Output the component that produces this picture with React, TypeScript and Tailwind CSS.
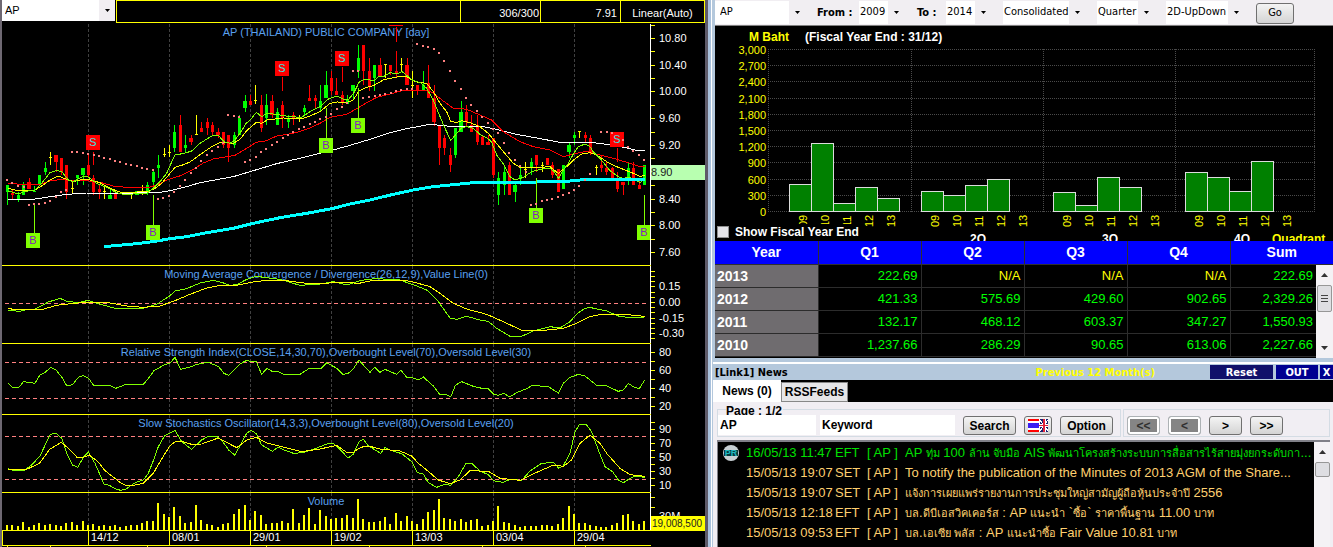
import type { ReactNode } from "react";
import clsx from "clsx";

// Plot coordinates are stored in thirds of a pixel
const UNIT = 3;
const STEP = 5.4;
const GRID = [88, 169, 250, 331, 412, 493, 574];
const DATES = ["14/12", "08/01", "29/01", "19/02", "13/03", "03/04", "29/04"];

const LIME = "#80ff00";
const FILL: Record<string, string> = { g: "#00ff00", r: "#ff0000", y: "#ffff00" };

type Candle = [string, number, number, number, number];

// colour, high, body top, body bottom, low
const candles: Candle[] = [
  ["g", 555, 555, 576, 615], ["r", 568, 580, 586, 597], ["g", 575, 585, 598, 606], ["g", 546, 555, 585, 585],
  ["r", 534, 546, 566, 566], ["g", 558, 573, 576, 576], ["g", 525, 525, 555, 555], ["g", 486, 503, 516, 525],
  ["y", 456, 472, 475, 495], ["r", 465, 465, 486, 516], ["r", 474, 474, 516, 525], ["r", 495, 495, 576, 597],
  ["y", 543, 565, 568, 582], ["g", 525, 525, 534, 555], ["g", 504, 504, 525, 555], ["r", 465, 495, 525, 534],
  ["r", 525, 534, 576, 585], ["r", 555, 567, 576, 597], ["y", 555, 573, 576, 597], ["g", 565, 585, 597, 597],
  ["r", 570, 580, 597, 597], ["y", 580, 580, 583, 583], ["y", 580, 580, 583, 583], ["y", 577, 577, 580, 597],
  ["g", 573, 573, 584, 584], ["y", 555, 577, 580, 585], ["g", 546, 555, 576, 585], ["g", 508, 516, 546, 556],
  ["g", 465, 495, 504, 535], ["y", 444, 462, 465, 472], ["y", 435, 455, 458, 472], ["g", 375, 396, 444, 455],
  ["r", 345, 375, 455, 455], ["g", 405, 435, 444, 455], ["r", 405, 414, 426, 435], ["y", 345, 402, 405, 405],
  ["r", 365, 384, 396, 396], ["r", 354, 366, 384, 405], ["r", 365, 375, 396, 405], ["r", 384, 396, 405, 415],
  ["r", 396, 396, 436, 445], ["r", 405, 405, 445, 486], ["g", 396, 405, 435, 444], ["g", 345, 354, 405, 405],
  ["g", 285, 303, 324, 336], ["r", 285, 303, 315, 315], ["y", 255, 300, 303, 312], ["r", 285, 315, 384, 396],
  ["g", 283, 315, 354, 375], ["r", 285, 303, 345, 354], ["g", 324, 336, 375, 375], ["r", 303, 315, 354, 384],
  ["g", 345, 354, 366, 384], ["r", 336, 346, 354, 375], ["y", 345, 353, 356, 366], ["g", 315, 324, 336, 345],
  ["r", 255, 294, 303, 303], ["r", 285, 294, 303, 324], ["g", 255, 303, 324, 334], ["g", 213, 255, 294, 294],
  ["r", 213, 234, 273, 285], ["r", 234, 273, 285, 285], ["r", 273, 285, 306, 315], ["g", 285, 300, 312, 312],
  ["g", 255, 255, 273, 297], ["g", 135, 174, 213, 234], ["r", 135, 135, 213, 254], ["r", 174, 213, 258, 273],
  ["g", 195, 195, 234, 273], ["r", 174, 195, 231, 231], ["y", 192, 192, 195, 234], ["r", 195, 195, 213, 225],
  ["r", 153, 213, 222, 234], ["y", 174, 192, 195, 213], ["r", 174, 195, 255, 255], ["y", 213, 255, 258, 294],
  ["r", 255, 255, 270, 285], ["g", 213, 255, 270, 270], ["r", 195, 249, 294, 294], ["r", 255, 294, 366, 378],
  ["r", 378, 378, 444, 495], ["r", 405, 414, 444, 465], ["r", 445, 465, 495, 516], ["g", 384, 384, 465, 474],
  ["g", 303, 336, 396, 396], ["r", 315, 336, 366, 378], ["r", 345, 375, 396, 396], ["r", 345, 375, 426, 435],
  ["r", 405, 410, 435, 435], ["r", 405, 425, 435, 435], ["r", 415, 415, 525, 534], ["g", 516, 534, 585, 615],
  ["g", 495, 516, 555, 585], ["r", 486, 495, 585, 585], ["g", 550, 555, 576, 606], ["g", 498, 525, 537, 555],
  ["y", 486, 507, 510, 534], ["g", 474, 486, 504, 525], ["r", 465, 465, 495, 516], ["y", 486, 495, 498, 516],
  ["r", 474, 474, 495, 495], ["r", 486, 495, 525, 534], ["r", 507, 507, 576, 576], ["g", 495, 495, 567, 567],
  ["g", 426, 435, 456, 474], ["g", 396, 405, 414, 435], ["y", 393, 393, 396, 414], ["r", 396, 405, 414, 426],
  ["r", 405, 414, 456, 465], ["y", 495, 502, 505, 524], ["r", 465, 495, 504, 516], ["r", 486, 504, 516, 525],
  ["r", 500, 504, 537, 537], ["r", 516, 534, 567, 576], ["r", 546, 546, 556, 585], ["g", 486, 504, 540, 555],
  ["r", 486, 504, 555, 555], ["r", 540, 555, 567, 567], ["g", 495, 495, 555, 555],
];

const ema5 =
  "24,573 56,582 72,575 105,570 125,550 150,518 170,511 186,516 205,540 220,545 250,529 265,531 290,550 320,562 350,578 365,582 400,582 440,580 460,565 480,545 500,520 525,464 550,461 575,453 600,430 635,408 655,406 672,425 690,430 705,420 720,400 737,372 755,355 769,337 785,350 801,340 834,344 870,350 905,352 930,335 960,320 985,297 1012,288 1028,297 1044,300 1061,280 1077,247 1093,237 1110,240 1125,240 1137,228 1150,230 1170,218 1190,222 1206,215 1225,230 1240,242 1262,248 1280,265 1300,300 1318,345 1335,385 1352,421 1368,403 1385,383 1402,380 1420,385 1440,403 1460,413 1474,425 1490,465 1512,495 1530,530 1545,540 1570,532 1595,515 1620,508 1650,505 1663,515 1675,536 1690,510 1705,490 1720,462 1735,440 1755,432 1770,440 1780,456 1800,475 1830,512 1855,530 1870,535 1890,532 1905,540 1920,548 1934,535";
const ema10 =
  "24,565 56,573 105,570 125,558 150,540 175,528 200,538 220,545 250,538 270,540 300,548 330,565 360,576 410,576 445,574 465,565 485,550 510,520 525,502 545,496 570,486 600,464 635,440 660,427 700,430 720,418 740,392 769,367 785,370 801,360 850,354 905,356 930,348 960,335 990,310 1012,306 1040,308 1060,300 1077,273 1100,262 1120,257 1150,240 1170,235 1200,229 1220,230 1245,245 1280,250 1300,275 1320,310 1340,335 1352,364 1370,368 1385,362 1410,368 1440,380 1465,400 1485,425 1512,457 1540,490 1560,502 1620,502 1650,500 1675,520 1700,500 1720,480 1745,462 1770,458 1790,465 1820,485 1850,500 1875,510 1900,520 1920,530 1934,525";
const ema25 =
  "24,549 60,553 120,553 155,541 190,539 215,543 250,541 300,547 340,558 390,563 445,563 470,555 500,540 545,526 580,508 610,489 640,477 705,466 740,445 769,427 800,422 830,408 880,400 920,388 960,370 990,352 1040,343 1077,322 1100,308 1130,292 1170,282 1210,271 1285,271 1300,280 1330,303 1360,325 1385,325 1410,332 1440,345 1475,360 1510,395 1560,425 1600,440 1650,450 1690,470 1720,462 1760,454 1800,465 1840,475 1880,487 1915,498 1934,500";
const ema75 =
  "24,598 100,598 150,590 200,583 260,579 400,579 480,577 520,570 560,560 600,548 700,530 760,512 830,491 920,470 1000,450 1050,436 1110,418 1170,398 1220,386 1290,373 1350,379 1450,380 1490,388 1550,403 1610,414 1680,427 1770,427 1830,434 1880,444 1910,451 1934,452";
const ema200 =
  "312,740 400,732 460,725 510,716 560,710 620,698 700,685 760,670 840,653 920,640 1000,625 1050,612 1110,600 1180,583 1240,570 1300,560 1370,553 1430,547 1580,547 1710,543 1760,538 1934,538";
const sar =
  "22,539 37,548 54,557 71,562 87,614 102,612 118,611 135,608 151,602 167,590 183,577 199,569 216,455 232,457 248,458 264,461 281,464 297,467 313,473 329,477 345,482 361,486 378,491 394,494 410,497 426,503 442,507 459,509 474,596 490,593 506,588 522,577 539,559 556,540 572,518 588,503 604,482 620,466 636,452 653,440 669,428 684,344 701,347 717,350 735,485 751,480 767,472 783,457 799,447 816,435 832,425 848,413 864,404 880,396 897,387 913,380 929,372 945,365 961,358 977,350 993,342 1010,328 1026,320 1042,310 1059,212 1075,214 1089,293 1107,290 1124,287 1140,284 1156,281 1172,278 1188,274 1203,271 1220,268 1236,266 1251,133 1269,137 1285,140 1301,146 1317,158 1332,184 1349,212 1365,242 1382,268 1398,293 1413,314 1430,334 1447,352 1463,368 1479,386 1495,400 1512,430 1528,458 1545,480 1561,497 1577,516 1593,614 1609,611 1625,604 1641,600 1656,597 1674,590 1690,585 1706,580 1721,570 1737,557 1754,539 1771,523 1804,395 1820,395 1836,399 1868,421 1885,440 1900,452 1916,466 1933,479";

const macd =
  "24,151 60,154 80,149 105,147 125,137 145,126 180,115 200,124 235,128 265,121 290,130 320,138 345,145 430,145 470,133 510,107 525,93 560,86 600,69 640,61 665,67 690,76 710,74 740,58 769,49 800,53 840,58 900,76 960,72 1000,65 1040,75 1077,63 1100,58 1130,56 1200,60 1250,78 1280,90 1310,118 1350,174 1370,178 1400,169 1440,180 1465,184 1490,205 1530,229 1565,229 1600,213 1650,200 1680,204 1710,185 1730,162 1750,148 1768,142 1820,153 1860,170 1920,174 1934,170";
const macdSignal =
  "24,145 50,150 125,149 170,136 220,130 260,127 330,129 380,138 430,142 480,138 525,122 570,103 620,84 660,76 710,76 760,66 800,61 850,61 920,70 970,71 1010,66 1077,70 1110,63 1150,61 1220,62 1240,66 1290,80 1320,100 1360,130 1400,147 1460,163 1510,185 1565,211 1630,211 1690,205 1730,190 1770,170 1810,162 1860,162 1934,169";
const rsi =
  "24,370 38,382 57,382 70,365 105,370 120,345 135,337 153,322 168,330 186,352 200,377 218,374 235,352 250,347 265,354 281,376 330,376 347,385 378,373 430,373 445,355 462,332 494,314 510,309 525,292 542,328 575,320 590,313 625,307 656,320 672,340 686,346 720,312 740,301 755,306 769,305 785,343 801,325 818,335 834,334 850,343 900,343 928,325 963,325 980,308 1012,326 1028,343 1044,341 1061,325 1077,300 1090,315 1110,337 1124,322 1140,337 1155,328 1190,343 1203,331 1220,352 1240,354 1255,360 1270,351 1300,378 1318,402 1340,404 1352,411 1366,376 1385,365 1420,379 1450,386 1465,386 1480,402 1495,406 1512,400 1528,411 1550,398 1580,386 1597,376 1645,380 1675,399 1690,370 1708,353 1735,343 1755,348 1790,376 1820,378 1855,394 1870,390 1885,370 1900,380 1918,386 1934,360";
const stoK =
  "24,626 40,631 72,631 95,615 120,588 150,524 168,519 185,535 200,580 217,615 233,622 250,592 265,576 285,610 312,672 330,677 345,686 362,691 378,687 395,675 412,665 430,660 445,640 462,597 475,560 494,527 525,511 545,545 575,568 605,540 625,529 650,529 665,540 686,570 704,585 720,558 740,520 753,511 769,521 785,555 818,574 834,561 850,569 880,580 910,578 940,568 980,552 1000,550 1020,568 1044,594 1060,583 1077,545 1090,538 1105,558 1142,580 1155,563 1170,570 1205,581 1235,605 1252,638 1270,642 1285,668 1310,682 1335,673 1352,676 1375,650 1398,610 1415,610 1440,633 1465,644 1480,662 1510,667 1530,658 1565,661 1590,633 1625,610 1660,607 1676,624 1690,617 1710,580 1725,515 1738,494 1760,495 1775,515 1795,570 1815,620 1838,635 1855,660 1871,668 1890,655 1905,648 1934,652";
const stoD =
  "24,628 80,628 118,610 150,567 184,547 205,565 232,593 250,592 268,585 295,606 315,632 360,667 378,676 400,676 430,670 460,640 480,605 510,557 525,546 545,544 575,553 605,552 655,534 710,563 740,540 769,532 800,549 850,561 905,575 960,567 1010,556 1040,577 1060,577 1077,565 1093,559 1110,559 1140,567 1200,573 1235,588 1255,610 1280,630 1315,660 1350,671 1380,660 1410,632 1465,634 1500,655 1560,661 1590,646 1640,624 1660,615 1690,619 1715,600 1740,550 1770,525 1800,550 1820,580 1860,625 1890,644 1934,649";
const volume = [
  795, 795, 798, 786, 801, 795, 789, 795, 792, 795, 798, 789, 786, 795, 783, 795, 792, 798, 795, 798, 795, 801, 798,
  795, 795, 789, 783, 783, 729, 762, 771, 741, 768, 789, 786, 735, 780, 792, 795, 801, 792, 789, 762, 747, 735, 780,
  753, 765, 792, 789, 789, 783, 789, 747, 789, 765, 744, 792, 750, 768, 777, 774, 774, 765, 774, 717, 777, 786, 786,
  783, 771, 792, 759, 783, 768, 783, 792, 777, 756, 750, 717, 774, 777, 783, 777, 786, 780, 777, 798, 795, 783, 738,
  786, 789, 795, 801, 798, 798, 798, 795, 795, 798, 792, 774, 738, 762, 789, 789, 795, 798, 801, 801, 795, 789, 765,
  762, 783, 792, 783,
];

// kind, box x, box y, line x, line from, line to
const signals: [string, number, number, number, number, number][] = [
  ["S", 86, 135, 93, 152, 165],
  ["S", 275, 61, 282, 77, 91],
  ["S", 335, 51, 342, 67, 82],
  ["S", 610, 132, 617, 148, 162],
  ["B", 26, 233, 34, 203, 233],
  ["B", 146, 225, 153, 195, 225],
  ["B", 319, 138, 326, 108, 138],
  ["B", 351, 118, 358, 88, 118],
  ["B", 529, 208, 536, 178, 208],
  ["B", 637, 225, 644, 195, 225],
];

function Line({ points, color, width = 1 }: { points: string; color: string; width?: number }) {
  return (
    <g transform={`scale(${1 / UNIT})`}>
      <polyline points={points} fill="none" stroke={color} strokeWidth={width} vectorEffect="non-scaling-stroke" />
    </g>
  );
}

type PanelProps = {
  top: number;
  height: number;
  title?: string;
  levels?: number[];
  ticks?: number[];
  labels?: [string, number][];
  children?: ReactNode;
};

function Panel({ top, height, title, levels = [], ticks = [], labels = [], children }: PanelProps) {
  return (
    <svg
      viewBox={`2 ${top} 703 ${height}`}
      className="block w-full shrink-0 font-['Liberation_Sans',sans-serif] text-[11px]"
      shapeRendering="crispEdges"
    >
      {GRID.map((x) => (
        <path key={x} d={`M${x + 0.5} ${top}V${top + height}`} stroke="#404040" strokeDasharray="3 2" />
      ))}
      {levels.map((y) => (
        <path key={y} d={`M5 ${y + 0.5}H646`} stroke="#ff8080" strokeDasharray="4 3" />
      ))}
      {title && (
        <text x="326" y={top + 12} textAnchor="middle" fill="#5aa0f0">
          {title}
        </text>
      )}
      {children}
      <path d={`M650.5 ${top}V${top + height}`} stroke="#fff" />
      {ticks.map((y) => (
        <path key={y} d={`M651 ${Math.floor(y / UNIT) + 0.5}h4`} stroke="#ff0" />
      ))}
      {labels.map(([label, y]) => (
        <text key={label} x="659" y={y + 4} fill="#fff">
          {label}
        </text>
      ))}
      <path d={`M2 ${top + height - 0.5}H651`} stroke="#ff0" />
    </svg>
  );
}

function PricePanel() {
  return (
    <Panel
      top={24}
      height={242}
      ticks={[76, 115, 154, 195, 235, 274, 317, 355, 397, 436, 475, 557, 598, 637, 676, 718, 757]}
      labels={[
        ["10.80", 38], ["10.40", 65], ["10.00", 91], ["9.60", 118],
        ["9.20", 145], ["8.40", 199], ["8.00", 225], ["7.60", 252],
      ]}
    >
      <text x="326" y="36" textAnchor="middle" fill="#5aa0f0">
        AP (THAILAND) PUBLIC COMPANY [day]
      </text>
      {candles.map(([kind, high, open, close, low], i) => {
        const x = Math.round(7 + STEP * i);
        const y = Math.round(open / UNIT);
        const wide = i % 5 === 4 && kind !== "y";
        return (
          <g key={i} fill={FILL[kind]}>
            <rect x={x} y={Math.round(high / UNIT)} width="1" height={Math.max(1, Math.round((low - high) / UNIT))} />
            <rect
              x={wide ? x - 2 : x - 1}
              y={y}
              width={wide ? 4 : 3}
              height={Math.max(1, Math.round(close / UNIT) - y)}
            />
          </g>
        );
      })}
      <Line points={ema75} color="#fff" />
      <Line points={ema25} color="#f00" />
      <Line points={ema10} color="#ff0" />
      <Line points={ema5} color={LIME} />
      <Line points={ema200} color="#0ff" width={3} />
      <path d="M389 25.5h14M396.5 27v15" stroke="#f00" />
      {signals.map(([kind, x, y, lx, from, to]) => (
        <g key={`${x}-${y}`}>
          <path d={`M${lx + 0.5} ${from}V${to}`} stroke={kind === "S" ? "#f00" : LIME} />
          <rect x={x} y={y} width="14" height="15" fill={kind === "S" ? "#f00" : LIME} />
          <text x={x + 7} y={y + 11} textAnchor="middle" fill={kind === "S" ? "#40e0e0" : "#8020c0"}>
            {kind}
          </text>
        </g>
      ))}
      {sar.split(" ").map((p) => {
        const [x, y] = p.split(",").map((v) => Math.round(Number(v) / UNIT));
        return <rect key={p} x={x - 1} y={y - 1} width="2" height="2" fill="#ff8080" />;
      })}
      <rect x="651" y="165" width="54" height="15" fill="#b8ffb0" />
      <text x="651" y="176" fill="#202020">
        8.90
      </text>
    </Panel>
  );
}

function TechnicalChart() {
  return (
    <section className="flex min-w-0 flex-col overflow-hidden border-l-2 border-[#6e6872] bg-black">
      <div className="flex h-6 shrink-0 text-[11px] text-white">
        <Combo label="Symbol" value="AP" className="h-[21px] w-[113px] pl-[3px]" />
        <div className="ml-px flex h-[23px] flex-1 border border-[#ff0]">
          <div className="flex-1" />
          <div className="w-20 border-l border-[#ff0] pt-[4px] pr-px text-right leading-4">306/300</div>
          <div className="w-20 border-l border-[#ff0] pt-[4px] pr-[3px] text-right leading-4">7.91</div>
          <button className="w-[84px] border-l border-[#ff0] pt-[2px] leading-4">Linear(Auto)</button>
        </div>
      </div>
      <PricePanel />
      {/* indicator plots share one origin, 260px below the price plot's */}
      <Panel
        top={6}
        height={78}
        title="Moving Average Convergence / Divergence(26,12,9),Value Line(0)"
        levels={[43]}
        ticks={[34, 49, 64, 79, 97, 112, 126, 142, 158, 175, 190, 205, 220, 236]}
        labels={[["0.15", 26], ["0.00", 42], ["-0.15", 58], ["-0.30", 73]]}
      >
        <Line points={macd} color={LIME} />
        <Line points={macdSignal} color="#ff0" />
      </Panel>
      <Panel
        top={84}
        height={71}
        title="Relative Strength Index(CLOSE,14,30,70),Overbought Level(70),Oversold Level(30)"
        levels={[102, 138]}
        ticks={[276, 303, 330, 357, 385, 411, 438]}
        labels={[["80", 92], ["60", 110], ["40", 128], ["20", 146]]}
      >
        <Line points={rsi} color={LIME} />
      </Panel>
      <Panel
        top={155}
        height={78}
        title="Slow Stochastics Oscillator(14,3,3),Overbought Level(80),Oversold Level(20)"
        levels={[176, 219]}
        ticks={[487, 508, 529, 550, 571, 592, 613, 634, 655, 676]}
        labels={[["90", 169], ["70", 183], ["50", 197], ["30", 211], ["10", 225]]}
      >
        <Line points={stoK} color={LIME} />
        <Line points={stoD} color="#ff0" />
      </Panel>
      <Panel top={233} height={38} title="Volume" ticks={[712, 742]} labels={[["30M", 256]]}>
        {volume.map((v, i) => (
          <rect
            key={i}
            x={Math.round(6 + STEP * i)}
            y={Math.round(v / UNIT)}
            width="2"
            height={270 - Math.round(v / UNIT)}
            fill="#ff0"
          />
        ))}
      </Panel>
      <svg
        viewBox="2 271 703 16"
        className="block w-full shrink-0 overflow-visible font-['Liberation_Sans',sans-serif] text-[11px]"
        shapeRendering="crispEdges"
      >
        <rect x="651" y="256" width="54" height="15" fill="#ff0" />
        <text x="652" y="267" fill="#202020" className="text-[10px]">
          19,008,500
        </text>
        <path d="M2.5 271V285.5H651" stroke="#ff0" fill="none" />
        <path d="M7.5 286v2M50.5 286v2M147.5 286v2M266.5 286v2M369.5 286v2M482.5 286v2M585.5 286v2" stroke="#ff0" />
        {GRID.map((x, i) => (
          <g key={x}>
            <path d={`M${x + 0.5} 271V285`} stroke="#ff0" />
            <text x={x + 3} y="281" fill="#fff">
              {DATES[i]}
            </text>
          </g>
        ))}
      </svg>
    </section>
  );
}

function Combo({ label, value, className }: { label: string; value: string; className: string }) {
  return (
    <span className="relative inline-flex shrink-0 self-start text-black">
      <select aria-label={label} className={clsx("appearance-none bg-white outline-none", className)}>
        <option>{value}</option>
      </select>
      <span className="pointer-events-none absolute inset-y-0 right-0 flex w-4 items-center justify-center bg-[#f1eef2]">
        <svg viewBox="0 0 5 3" className="w-[5px]">
          <path d="M0 0h5L2.5 3z" fill="#000" />
        </svg>
      </span>
    </span>
  );
}

const QUARTERS = [
  { name: "", x: 789, tops: [184, 143, 203, 187, 198] },
  { name: "2Q", x: 921, tops: [191, 195, 185, 179] },
  { name: "3Q", x: 1053, tops: [192, 205, 177, 187] },
  { name: "4Q", x: 1185, tops: [172, 177, 191, 161] },
];
const YEARS = ["09", "10", "11", "12", "13"];
const SCALE = ["3,000", "2,700", "2,400", "2,100", "1,800", "1,500", "1,200", "900", "600", "300", "0"];

function QuarterChart() {
  return (
    <div className="relative bg-black">
      <svg
        viewBox="715 26 618 215"
        className="block w-full font-['Liberation_Sans',sans-serif] text-[11px]"
        shapeRendering="crispEdges"
      >
        <g className="text-[12px] font-bold">
          <text x="749" y="41" fill="#ff0">M Baht</text>
          <text x="805" y="41" fill="#fff">(Fiscal Year End : 31/12)</text>
          <text x="1272" y="243" fill="#ff0">Quadrant</text>
        </g>
        <g stroke="#4a4a4a" strokeDasharray="1 1" fill="none">
          {SCALE.map((s, i) => (
            <path key={s} d={`M768 ${Math.round(49 + i * 16.2) + 0.5}H1315`} />
          ))}
          {[768, 911, 1043, 1175, 1314].map((x) => (
            <path key={x} d={`M${x + 0.5} 49V212`} />
          ))}
        </g>
        {SCALE.map((s, i) => (
          <text key={s} x="766" y={Math.round(54 + i * 16.2)} textAnchor="end" fill="#ff0">
            {s}
          </text>
        ))}
        {QUARTERS.map((q) => (
          <g key={q.x}>
            {q.tops.map((y, i) => (
              <rect
                key={i}
                x={q.x + i * 22 + 0.5}
                y={y + 0.5}
                width="22"
                height={211 - y}
                fill="#008000"
                stroke="#dcdcdc"
              />
            ))}
            {YEARS.map((year, i) => (
              <text
                key={year}
                transform={`translate(${q.x + i * 22 + 18} 227) rotate(-90)`}
                fill="#ff0"
              >
                {year}
              </text>
            ))}
            <text x={q.x + 57} y="243" textAnchor="middle" fill="#fff" className="text-[12px] font-bold">
              {q.name}
            </text>
          </g>
        ))}
      </svg>
      <label className="absolute bottom-px left-0 flex h-4 items-center gap-[6px] bg-black pl-[2px] text-[12px] font-bold text-white">
        <input type="checkbox" className="size-3 appearance-none border border-[#8e8f8f] bg-[#e4e4e8]" />
        Show Fiscal Year End
      </label>
    </div>
  );
}

const FINANCE = [
  ["2013", "222.69", "N/A", "N/A", "N/A", "222.69"],
  ["2012", "421.33", "575.69", "429.60", "902.65", "2,329.26"],
  ["2011", "132.17", "468.12", "603.37", "347.27", "1,550.93"],
  ["2010", "1,237.66", "286.29", "90.65", "613.06", "2,227.66"],
];

function Arrow({ down }: { down?: boolean }) {
  return (
    <svg viewBox="0 0 7 4" className={clsx("my-2 w-[7px] shrink-0", down && "rotate-180")}>
      <path d="M0 4h7L3.5 0z" fill="#333" />
    </svg>
  );
}

function FinanceTable() {
  return (
    <div className="relative h-[117px] overflow-hidden bg-black">
      <table className="w-full table-fixed border-collapse text-[13px]">
        <thead>
          <tr className="h-[23px] bg-[#0000ff] text-[14px] leading-5 text-white">
            {["Year", "Q1", "Q2", "Q3", "Q4", "Sum"].map((h) => (
              <th key={h} className="border-r border-b border-[#303030] p-0 last:border-r-0">
                {h}
              </th>
            ))}
          </tr>
        </thead>
        <tbody>
          {FINANCE.map(([year, ...cells]) => (
            <tr key={year} className="h-[23px] leading-5">
              <th className="border border-l-0 border-[#2c2c2c] bg-[#6f6c6f] p-0 pl-[2px] text-left text-[14px] text-white">
                {year}
              </th>
              {cells.map((cell, i) => (
                <td
                  key={i}
                  className={clsx(
                    "border border-[#2c2c2c] p-0 pr-[3px] text-right last:border-r-0 last:pr-5",
                    cell === "N/A" ? "text-[#ff0]" : "text-[#00ff00]"
                  )}
                >
                  {cell}
                </td>
              ))}
            </tr>
          ))}
        </tbody>
      </table>
      <div className="absolute top-6 right-0 bottom-0 flex w-[17px] flex-col items-center bg-[#f4f2f5]">
        <Arrow />
        <div className="flex h-[27px] w-[15px] flex-col items-center justify-center gap-[2px] rounded-xs border border-[#979797] bg-[#dedee2] text-[#444]">
          <i className="h-px w-[7px] bg-current" />
          <i className="h-px w-[7px] bg-current" />
          <i className="h-px w-[7px] bg-current" />
        </div>
        <div className="flex-1" />
        <Arrow down />
      </div>
    </div>
  );
}

const NEWS = [
  ["16/05/13 11:47", "EFT", "AP ทุ่ม 100 ล้าน จับมือ AIS พัฒนาโครงสร้างระบบการสื่อสารไร้สายมุ่งยกระดับกา..."],
  ["15/05/13 19:07", "SET", "To notify the publication of the Minutes of 2013 AGM of the Share..."],
  ["15/05/13 19:07", "SET", "แจ้งการเผยแพร่รายงานการประชุมใหญ่สามัญผู้ถือหุ้นประจำปี 2556"],
  ["15/05/13 12:18", "EFT", "บล.ดีบีเอสวิคเคอร์ส : AP แนะนำ `ซื้อ` ราคาพื้นฐาน 11.00 บาท"],
  ["15/05/13 09:53", "EFT", "บล.เอเซีย พลัส : AP แนะนำซื้อ Fair Value 10.81 บาท"],
];

// Thai glyphs run wide next to the Latin ones, so they are set smaller
function Headline({ text }: { text: string }) {
  return text.split(/([\u0E00-\u0E7F]+)/).map((part, i) =>
    i % 2 ? (
      <span key={i} className="text-[11px]">
        {part}
      </span>
    ) : (
      part
    )
  );
}

function ToolButton({ children, className, label }: { children: ReactNode; className: string; label?: string }) {
  return (
    <button
      aria-label={label}
      className={clsx(
        "flex h-[19px] shrink-0 items-center justify-center rounded-[3px] border bg-linear-to-b from-[#f4f4f4] to-[#d4d4d4]",
        className
      )}
    >
      {children}
    </button>
  );
}

function FlagIcon() {
  return (
    <svg viewBox="0 0 20 13" className="w-5 shrink-0" shapeRendering="crispEdges">
      <rect width="12" height="13" fill="#fff" />
      <path d="M0 0h11v2H0zM0 11h11v2H0z" fill="#f00" />
      <path d="M0 4h11v5H0z" fill="#3a1ef0" />
      <path d="M12 0h8v13h-8z" fill="#1c2470" />
      <path d="M12 1l8 11M20 1l-8 11" stroke="#fff" />
      <path d="M16 0v13M12 6.5h8" stroke="#fff" strokeWidth="3" />
      <path d="M16 0v13" stroke="#e0203a" strokeWidth="2" />
      <path d="M11 6.5h9" stroke="#e0203a" />
    </svg>
  );
}

function News() {
  return (
    <div className="flex min-h-0 flex-1 flex-col border-l border-white bg-[#b4c8dc] pl-px">
      <header className="flex h-[18px] shrink-0 items-center border-t-2 border-white font-['DejaVu_Sans_Condensed','Liberation_Sans',sans-serif] text-[11px] leading-none font-bold">
        <h2 className="flex-1 pl-[2px]">[Link1] News</h2>
        <span className="mr-[55px] text-[#ff0]">Previous 12 Month(s)</span>
        <button className="mr-[3px] h-[14px] w-[63px] bg-[#10106a] text-white">Reset</button>
        <button className="mr-[2px] h-[14px] w-[42px] bg-[#000090] text-white">OUT</button>
        <button className="h-[14px] w-[13px] bg-[#000090] text-white">X</button>
      </header>
      <div className="flex h-[22px] shrink-0 items-end bg-black text-[12px] font-bold">
        <button className="h-[22px] w-[68px] bg-white text-black">News (0)</button>
        <button className="h-[20px] w-[67px] border border-[#888] bg-[#e6e6e8] text-black">RSSFeeds</button>
      </div>
      <div className="flex min-h-0 flex-1 flex-col bg-[#f1eef3] pr-[3px] pl-1">
        <div className="flex h-[38px] shrink-0 items-end gap-[2px] pb-[3px] text-[12px] font-bold">
          <div className="relative flex h-[28px] items-end gap-2 border border-[#d4dce4] pr-[7px] pb-px">
            <span className="absolute -top-[7px] left-2 bg-[#f1eef3] pr-px leading-4">Page : 1/2</span>
            <div className="z-10 flex gap-1">
              <input aria-label="Symbol" defaultValue="AP" className="h-5 w-[98px] bg-white pl-[2px] outline-none" />
              <input aria-label="Keyword" defaultValue="Keyword" className="h-5 w-[135px] bg-white pl-[2px] outline-none" />
            </div>
            <ToolButton className="w-[53px] border-[#707070]">Search</ToolButton>
            <ToolButton className="w-[28px] border-[#707070]" label="Language">
              <FlagIcon />
            </ToolButton>
            <ToolButton className="w-[53px] border-[#707070]">Option</ToolButton>
          </div>
          <div className="flex h-[28px] flex-1 items-end gap-2 border border-[#d4dce4] pb-px pl-[3px]">
            <ToolButton className="w-[33px] border-[#adb2b5] bg-none bg-[#858585] text-[#303030] ring-2 ring-white ring-inset">
              &lt;&lt;
            </ToolButton>
            <ToolButton className="w-[33px] border-[#adb2b5] bg-none bg-[#858585] text-[#303030] ring-2 ring-white ring-inset">
              &lt;
            </ToolButton>
            <ToolButton className="w-[33px] border-[#707070]">&gt;</ToolButton>
            <ToolButton className="w-[33px] border-[#707070]">&gt;&gt;</ToolButton>
          </div>
        </div>
        <div className="flex min-h-0 flex-1 border-t-2 border-l border-[#808088] bg-black">
          <ul className="min-w-0 flex-1 overflow-hidden pt-px text-[13px] whitespace-nowrap text-[#ffd070]">
            {NEWS.map(([time, source, headline], i) => (
              <li
                key={i}
                className={clsx("grid h-5 grid-cols-[28px_89px_32px_38px_1fr] items-center leading-5", i === 0 && "text-[#00e000]")}
              >
                <span className="pl-[5px]">
                  {i === 0 && (
                    <svg viewBox="0 0 16 16" className="w-4">
                      <circle cx="8" cy="8" r="8" fill="#c8d0d4" />
                      <path d="M1 5h14v6H1z" fill="#06383e" />
                      <text x="8" y="11" textAnchor="middle" fill="#20b8c0" className="text-[9px] font-bold">
                        PR
                      </text>
                    </svg>
                  )}
                </span>
                <span>{time}</span>
                <span>{source}</span>
                <span>[ AP ]</span>
                <a href="#news" className="truncate">
                  <Headline text={headline} />
                </a>
              </li>
            ))}
          </ul>
          <div className="flex w-4 flex-col items-center bg-[#f4f2f5]">
            <Arrow />
            <div className="h-[15px] w-[15px] rounded-xs border border-[#979797] bg-[#dedee2]" />
          </div>
        </div>
      </div>
    </div>
  );
}

export default function App() {
  return (
    <main className="grid h-screen grid-cols-[705fr_628fr] overflow-hidden bg-black font-['Liberation_Sans',sans-serif]">
      <TechnicalChart />
      <section className="flex min-w-0 border-l-[3px] border-[#5e5a68] bg-[#a9c1dc]">
        <div className="ml-[3px] flex min-w-0 flex-1 flex-col">
          <div className="border-l border-white bg-[#b4c8dc] pb-1 pl-[3px]">
            <div className="flex h-[26px] items-center border-b border-[#808080] bg-[#f1eef2] pt-px font-['DejaVu_Sans_Condensed','Liberation_Sans',sans-serif] text-[11px]">
              <Combo label="Company" value="AP" className="h-[23px] w-[90px] pl-[5px]" />
              <b className="ml-[12px] w-[42px] whitespace-nowrap">From :</b>
              <Combo label="From year" value="2009" className="h-[23px] w-[45px] pl-px" />
              <b className="ml-[13px] w-[29px] whitespace-nowrap">To :</b>
              <Combo label="To year" value="2014" className="h-[23px] w-[45px] pl-px" />
              <Combo label="Statement" value="Consolidated" className="ml-3 h-[23px] w-[82px] pl-px" />
              <Combo label="Period" value="Quarter" className="ml-3 h-[23px] w-[57px] pl-px" />
              <Combo label="Style" value="2D-UpDown" className="ml-3 h-[23px] w-[78px] pl-px" />
              <ToolButton className="ml-[12px] h-[21px] w-[38px] border-[#707070]">Go</ToolButton>
            </div>
            <QuarterChart />
            <FinanceTable />
          </div>
          <News />
        </div>
      </section>
    </main>
  );
}
